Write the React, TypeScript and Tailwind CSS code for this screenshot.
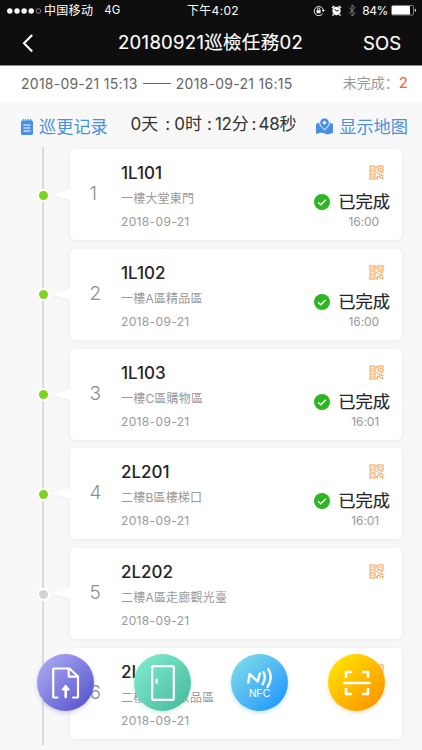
import React from "react";

type Stop = {
  id: number;
  code: string;
  place: string;
  date: string;
  time?: string;
};

const stops: Stop[] = [
  { id: 1, code: "1L101", place: "一樓大堂東門", date: "2018-09-21", time: "16:00" },
  { id: 2, code: "1L102", place: "一樓A區精品區", date: "2018-09-21", time: "16:00" },
  { id: 3, code: "1L103", place: "一樓C區購物區", date: "2018-09-21", time: "16:01" },
  { id: 4, code: "2L201", place: "二樓B區樓梯口", date: "2018-09-21", time: "16:01" },
  { id: 5, code: "2L202", place: "二樓A區走廊觀光臺", date: "2018-09-21" },
  { id: 6, code: "2L203", place: "二樓B區化妝品區", date: "2018-09-21" },
];

function StatusBar() {
  return (
    <div className="relative flex h-[21px] items-center justify-between pl-[7px] pr-[6px] text-[12px] leading-none">
      <div className="flex items-center">
        <svg width="35" height="8" viewBox="0 0 35 8" fill="#fff">
          <circle cx="2.8" cy="4" r="2.7" />
          <circle cx="10" cy="4" r="2.7" />
          <circle cx="17.1" cy="4" r="2.7" />
          <circle cx="24.2" cy="4" r="2.7" />
          <circle cx="31.4" cy="4" r="2.3" fill="none" stroke="#aaa" strokeWidth="0.7" />
        </svg>
        <span className="ml-[2px] mt-px tracking-[0.3px]">中国移动</span>
        <span className="ml-[11px] mt-px text-[11.5px]">4G</span>
      </div>
      <span className="absolute left-[187px] top-[5px] whitespace-nowrap tracking-[0.3px]">下午4:02</span>
      <div className="flex items-center">
        <svg width="12" height="12" viewBox="0 0 12 12" fill="none" stroke="#fff" strokeWidth="0.9">
          <path d="M9.6 8.7A4.6 4.6 0 1 1 10.3 5" />
          <path d="M8.8 5h3l-1.5 1.9z" fill="#fff" stroke="none" />
          <rect x="3.6" y="5.2" width="4" height="3" fill="#fff" stroke="none" />
          <path d="M4.4 5.3V4.2a1.2 1.2 0 0 1 2.4 0v1.1" />
        </svg>
        <svg className="ml-[6px]" width="11" height="11" viewBox="0 0 11 11" fill="none">
          <circle cx="5.5" cy="6" r="4.2" fill="#fff" />
          <path d="M1 3l2.3-2M10 3L7.7 1M2.5 9.5l-1 1M8.5 9.5l1 1" stroke="#fff" strokeWidth="1.6" />
          <path d="M3.8 4.2l1.7 1.9 2.2-1" stroke="#0e0e0e" strokeWidth="1" />
        </svg>
        <svg className="ml-[6px]" width="8" height="13" viewBox="0 0 8 13" fill="none" stroke="#8a8a8a" strokeWidth="0.9">
          <path d="M1 3.5l6 6L4 12V1l3 2.5-6 6" />
        </svg>
        <span className="ml-[6px] mt-px text-[12px] tracking-[-0.4px]">84%</span>
        <svg className="ml-[3px]" width="25" height="11" viewBox="0 0 25 11" fill="none">
          <rect x="0.5" y="0.5" width="22" height="9.5" rx="1.3" stroke="#999" strokeWidth="0.8" />
          <rect x="1" y="1" width="18" height="8.5" rx="0.6" fill="#fff" />
          <path d="M23.8 3.8v3a1.5 1.5 0 0 0 0-3z" fill="#ddd" />
        </svg>
      </div>
    </div>
  );
}

function NavBar() {
  return (
    <div className="relative flex h-[44px] items-center justify-between pl-[21px] pr-[21px]">
      <svg width="14" height="20" viewBox="0 0 14 20" fill="none" stroke="#fff" strokeWidth="2.1">
        <path d="M11.2 2L3 10.3l8.2 8.2" />
      </svg>
      <h1 className="absolute left-[118px] top-[7px] whitespace-nowrap text-[18.5px] font-normal leading-[28px] tracking-[0.3px] [-webkit-text-stroke:0.15px_#fff]">
        20180921巡檢任務02
      </h1>
      <button className="pt-px text-[18.5px] leading-none [-webkit-text-stroke:0.15px_#fff]">SOS</button>
    </div>
  );
}

function QrIcon() {
  return (
    <svg width="15" height="15" viewBox="0 0 15 15" fill="none" stroke="#f5a964" strokeWidth="1.2">
      <rect x="1" y="1" width="5" height="5" />
      <rect x="9" y="1" width="5" height="5" />
      <rect x="1" y="9" width="5" height="5" />
      <path d="M2.7 3.5h1.6M10.7 3.5h1.6M2.7 11.5h1.6" strokeWidth="1.6" />
      <path d="M8.5 9h2.5v2.5H8.5v3M12.5 8.5v2h2M11 14.2v-1.5h3.5M13.8 11.8v3" strokeWidth="1" />
      <path d="M0.5 7.5h2M5 7.5h4M11 7.5h3.5M7.5 1v2.5M7.5 12v2.5" strokeWidth="0.7" />
    </svg>
  );
}

function StopCard({ stop }: { stop: Stop }) {
  const done = Boolean(stop.time);

  return (
    <li className="flex h-[91px] items-center">
      <span
        className={
          "mt-px h-[13px] w-[13px] shrink-0 rounded-full border-2 border-white " +
          (done ? "bg-[#7ed321]" : "bg-[#d2d2d2]")
        }
      />
      <svg className="relative z-10 ml-px mr-[-1px] shrink-0 drop-shadow-[-1px_1px_1px_rgba(0,0,0,0.04)]" width="20" height="11" viewBox="0 0 20 11">
        <path d="M0 5.5L20 0v11z" fill="#fff" />
      </svg>
      <article className="flex h-[91px] w-[332px] shrink-0 rounded-[5px] bg-white shadow-[0_1px_5px_rgba(0,0,0,0.06)]">
        <span className="w-[51px] shrink-0 pl-[19.5px] pt-[33px] text-[19px] font-light leading-[24px] text-[#8e8e8e]">
          {stop.id}
        </span>
        <div className="flex-1 text-[12px] text-[#999]">
          <h2 className="mt-[13px] text-[17px] font-medium leading-[22px] text-[#252525]">{stop.code}</h2>
          <p className="mt-[6px] leading-[18px] tracking-[0.2px]">{stop.place}</p>
          <p className="mt-[5px] leading-[18px] tracking-[0.35px]">{stop.date}</p>
        </div>
        <div className="flex flex-col items-end pr-[12px]">
          <div className="mr-[6px] mt-[16px] h-[15px]">
            <QrIcon />
          </div>
          {done && (
            <>
              <div className="mt-[10px] flex h-[24px] items-center">
                <svg width="16" height="16" viewBox="0 0 16 16" fill="none">
                  <circle cx="8" cy="8" r="8" fill="#2db523" />
                  <path d="M4 8.3l2.8 2.5 5-5" stroke="#fff" strokeWidth="1.3" />
                </svg>
                <span className="ml-[8px] text-[17.3px] leading-[24px] text-[#252525] [-webkit-text-stroke:0.15px_#252525]">
                  已完成
                </span>
              </div>
              <span className="mr-[11px] text-[12px] leading-[16px] tracking-[-0.1px] text-[#999]">{stop.time}</span>
            </>
          )}
        </div>
      </article>
    </li>
  );
}

const fab = "flex h-[57px] w-[57px] items-center justify-center rounded-full ";

function FloatingActions() {
  return (
    <div className="absolute left-[37px] top-[654px] z-20 flex gap-[40px]">
      <button className={fab + "bg-linear-to-br from-[#b5b0f5] to-[#544bc8] shadow-[0_2px_4px_rgba(84,75,200,0.25)]"}>
        <svg width="30" height="34" viewBox="0 0 30 34" fill="none" stroke="#fff" strokeWidth="2.2" strokeLinecap="round" strokeLinejoin="round">
          <path d="M6.5 31.5H3a.8.8 0 0 1-.8-.8V3.3c0-.5.3-.8.8-.8h15.5l8.5 8v20.2c0 .5-.3.8-.8.8H22" />
          <path d="M17.7 3v7.7h8.8" />
          <path d="M14.7 31v-9" strokeWidth="2.6" />
          <path d="M14.7 19.5l-3.3 4.2h6.6z" fill="#fff" strokeWidth="1.5" />
        </svg>
      </button>
      <button className={fab + "bg-linear-to-br from-[#84efd2] to-[#43b89a] shadow-[0_2px_4px_rgba(67,184,154,0.25)]"}>
        <svg width="24" height="36" viewBox="0 0 24 36" fill="none">
          <rect x="1.2" y="1.2" width="21.6" height="33.6" rx="1.5" stroke="#fff" strokeWidth="2.2" />
          <path d="M5.7 14.7v3" stroke="#fff" strokeWidth="2.3" strokeLinecap="round" />
        </svg>
      </button>
      <button className={fab + "flex-col bg-linear-to-br from-[#85e0e4] to-[#0d8fff] text-white shadow-[0_2px_4px_rgba(13,143,255,0.25)]"}>
        <svg width="28" height="22" viewBox="0 0 28 22" fill="none" stroke="#fff" strokeWidth="2.4" strokeLinecap="round" strokeLinejoin="round">
          <path d="M2.3 15.5L3.5 7l8.3 7.5 2-8" />
          <path d="M17.5 5.2q3 5.5-.8 12" />
          <path d="M22.3 2.2q5.2 8.500-.8 17.8" />
        </svg>
        <span className="-mt-px font-['Liberation_Sans',sans-serif] text-[10.3px] leading-[11px]">NFC</span>
      </button>
      <button className={fab + "bg-linear-to-br from-[#ffea00] to-[#ff8a00] shadow-[0_2px_4px_rgba(255,160,0,0.25)]"}>
        <svg width="28" height="28" viewBox="0 0 28 28" fill="none" stroke="#fff" strokeWidth="2.6" strokeLinejoin="round">
          <path d="M3 9V3h6M19 3h6v6M3 19v6h6M19 25h6v-6" />
          <path d="M1.5 14h25" strokeLinecap="round" />
        </svg>
      </button>
    </div>
  );
}

export default function App() {
  return (
    <div className="relative h-[750px] w-[422px] overflow-hidden bg-[#f8f8f8] font-['Inter','Noto_Sans_CJK_SC',sans-serif]">
      <header className="border-b border-[#8b8b8b] bg-[#0e0e0e] text-white">
        <StatusBar />
        <NavBar />
      </header>

      {/* Task period */}
      <div className="flex h-[36px] items-center justify-between whitespace-nowrap bg-white pb-[2px] pl-[21px] pr-[14px] text-[14px] text-[#666]">
        <div className="flex items-center tracking-[0.27px]">
          <span>2018-09-21 15:13</span>
          <span className="mx-[5px] h-px w-[28px] bg-[#666]" />
          <span>2018-09-21 16:15</span>
        </div>
        <div className="text-[#999]">
          未完成：
          <span className="text-[15px] text-[#f0603f]">2</span>
        </div>
      </div>

      {/* Log link, elapsed time, map link */}
      <div className="flex h-[44px] items-center justify-between whitespace-nowrap pl-[21px] pr-[14px] text-[17.2px] text-[#4a90e2]">
        <a className="mt-[6px] flex items-center">
          <svg className="mr-[6px]" width="12" height="16" viewBox="0 0 12 16" fill="none">
            <rect x="0" y="1.5" width="12" height="14.5" rx="1.5" fill="#4a90e2" />
            <path d="M2.2 0v3M4.7 0v3M7.3 0v3M9.8 0v3" stroke="#4a90e2" strokeWidth="1.2" />
            <path d="M2.5 6h7M2.5 9h7M2.5 12h7" stroke="#fff" strokeWidth="1" />
          </svg>
          巡更记录
        </a>
        <div className="flex pl-[3px] pt-[2px] text-[17px] text-[#333]">
          <span>0天</span>
          <span className="ml-[7px]">:</span>
          <span className="ml-[4px]">0时</span>
          <span className="ml-[5px]">:</span>
          <span className="ml-[3px] tracking-[-0.2px]">12分</span>
          <span className="ml-[3px]">:</span>
          <span className="ml-[2px] tracking-[-0.2px]">48秒</span>
        </div>
        <a className="mt-[6px] flex items-center">
          <svg className="mr-[6px]" width="17" height="17" viewBox="0 0 17 17">
            <path d="M0 6l3-1.5c.5 3 3 5.5 5.5 8 2.5-2.5 5-5 5.5-8L17 6v9l-5.5 1.5-6-2L0 16z" fill="#4a90e2" />
            <path d="M8.5 0a4.7 4.7 0 0 0-4.7 4.7c0 2.6 2.3 4.6 4.7 7 2.4-2.4 4.7-4.4 4.7-7A4.7 4.7 0 0 0 8.5 0z" fill="#4a90e2" stroke="#f8f8f8" strokeWidth="0.7" />
            <circle cx="8.5" cy="4.8" r="1.8" fill="#f8f8f8" />
          </svg>
          显示地图
        </a>
      </div>

      {/* Timeline */}
      <div className="relative pl-[37px] pt-[3px]">
        <div className="absolute left-[42px] top-[1px] h-[598px] w-[2px] bg-[#dcdcdc]" />
        <ul className="relative flex flex-col gap-[8.8px]">
          {stops.map((stop) => (
            <StopCard key={stop.id} stop={stop} />
          ))}
        </ul>
      </div>

      <FloatingActions />
    </div>
  );
}
